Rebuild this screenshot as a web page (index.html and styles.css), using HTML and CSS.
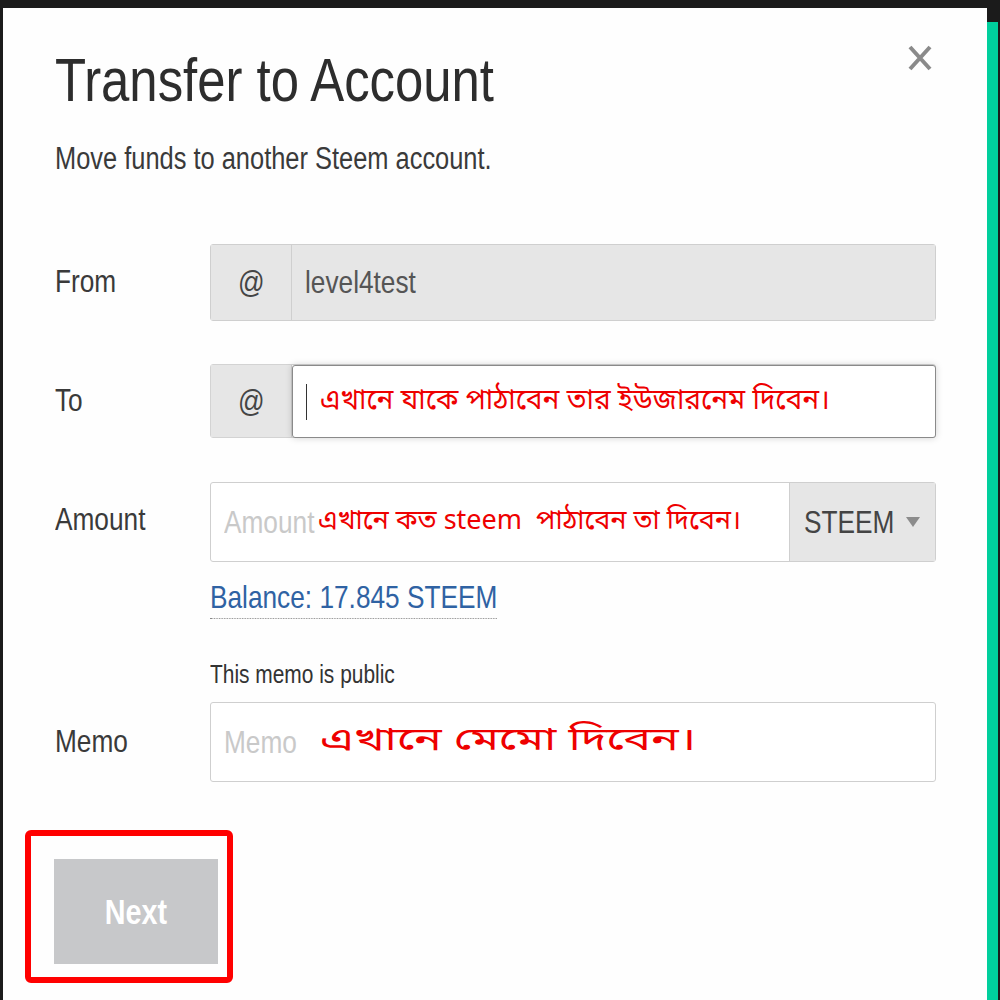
FILE: index.html
```html
<!DOCTYPE html>
<html lang="en">
<head>
<meta charset="utf-8">
<title>Transfer to Account</title>
<link rel="stylesheet" href="styles.css">
</head>
<body>
<div class="frame">
  <div class="modal">
    <button class="close" aria-label="Close">
      <svg width="24" height="28" viewBox="0 0 24 28"><path d="M2 3 L22 25 M22 3 L2 25" stroke="#8a8a8a" stroke-width="4" fill="none"/></svg>
    </button>
    <h1 class="title"><span class="cond">Transfer to Account</span></h1>
    <p class="subtitle"><span class="cond">Move funds to another Steem account.</span></p>

    <div class="form">
      <div class="label lbl-from"><span class="cond">From</span></div>
      <div class="group g-from">
        <span class="addon"><span class="cond mid">@</span></span>
        <div class="field disabled"><span class="cond">level4test</span></div>
      </div>

      <div class="label lbl-to"><span class="cond">To</span></div>
      <div class="group g-to">
        <span class="addon"><span class="cond mid">@</span></span>
        <div class="field focused"><span class="caret"></span><span class="bn">এখানে যাকে পাঠাবেন তার ইউজারনেম দিবেন।</span></div>
      </div>

      <div class="label lbl-amount"><span class="cond">Amount</span></div>
      <div class="group g-amount">
        <div class="field plain"><span class="ph"><span class="cond">Amount</span></span><span class="bn bn-amount">এখানে কত steem&nbsp; পাঠাবেন তা দিবেন।</span></div>
        <div class="select"><span class="steem"><span class="cond">STEEM</span></span><span class="arrow"></span></div>
      </div>

      <div class="spacer"></div>
      <div class="balance-row"><span class="balance cond">Balance: 17.845 STEEM</span></div>

      <div class="spacer"></div>
      <div class="note"><span class="cond">This memo is public</span></div>

      <div class="label lbl-memo"><span class="cond">Memo</span></div>
      <div class="group g-memo">
        <div class="field plain"><span class="ph ph-memo"><span class="cond">Memo</span></span><span class="bn bn-memo">এখানে মেমো দিবেন।</span></div>
      </div>
    </div>

    <div class="highlight">
      <button class="next"><span class="cond mid">Next</span></button>
    </div>
  </div>
  <div class="stripe"></div>
</div>
</body>
</html>
```

FILE: styles.css
```css
html, body {
  margin: 0;
  padding: 0;
  background: #1b1b1b;
  height: 1000px;
  overflow: hidden;
}
.frame {
  display: flex;
  align-items: flex-start;
  padding-left: 3px;
  height: 1000px;
}
.modal {
  position: relative;
  width: 984px;
  height: 992px;
  margin-top: 8px;
  background: #fefefe;
  box-sizing: border-box;
  padding: 37px 51px 0 52px;
  font-family: "Liberation Sans", Arial, sans-serif;
  color: #333;
}
.cond {
  display: inline-block;
  white-space: nowrap;
  transform: scaleX(0.82);
  transform-origin: left center;
}
.cond.mid { transform-origin: center center; }
.stripe {
  width: 11px;
  height: 978px;
  margin-top: 22px;
  background: #00cf9d;
}
.close {
  position: absolute;
  top: 36px;
  right: 55px;
  border: 0;
  background: none;
  padding: 0;
  cursor: pointer;
}
.title {
  margin: 0;
  font-weight: normal;
  font-size: 62px;
  line-height: 70px;
  color: #2d2d2d;
}
.subtitle {
  margin: 26px 0 0;
  font-size: 31px;
  line-height: 36px;
  color: #3a3a3a;
}
.form {
  display: grid;
  grid-template-columns: 155px 1fr;
  align-items: center;
  margin-top: 67px;
}
.label {
  font-size: 32px;
  line-height: 36px;
  color: #3a3a3a;
  margin-top: -4px;
}
.lbl-to { margin-top: 40px; }
.lbl-amount { margin-top: 38px; }
.lbl-memo { margin-top: 11px; }
.group {
  display: flex;
  border: 1px solid #cfcfcf;
  border-radius: 3px;
  box-sizing: border-box;
  height: 77px;
  background: #fff;
}
.g-to { margin-top: 43px; height: 74px; border-color: #d3d3d3; }
.g-amount { margin-top: 44px; height: 80px; }
.g-memo { margin-top: 13px; height: 80px; }
.addon {
  width: 80px;
  flex: none;
  display: flex;
  align-items: center;
  justify-content: center;
  background: #e6e6e6;
  border-right: 1px solid #cfcfcf;
  font-size: 32px;
  color: #444;
}
.field {
  flex: 1;
  display: flex;
  align-items: center;
  font-size: 32px;
  color: #555;
  padding-left: 13px;
  min-width: 0;
}
.field.disabled { background: #e6e6e6; }
.field.focused {
  background: #fff;
  border: 1px solid #8a8a8a;
  border-radius: 3px;
  margin: 0 -1px -1px 0;
  box-shadow: 0 0 7px rgba(0,0,0,0.18);
  position: relative;
}
.caret {
  width: 1px;
  height: 36px;
  background: #333;
  margin-right: 13px;
}
.bn {
  font-family: "Noto Sans Bengali", "Noto Serif Bengali", "Lohit Bengali", "Mukti", "FreeSans", sans-serif;
  color: #ee0000;
  font-size: 28px;
  white-space: nowrap;
}
.bn-amount { font-size: 27px; }
.bn-memo {
  display: inline-block;
  font-size: 32px;
  transform: scaleX(1.45);
  transform-origin: left center;
}
.ph { color: #c9c9c9; width: 94px; flex: none; }
.ph-memo { width: 96px; }
.select {
  width: 146px;
  flex: none;
  display: flex;
  align-items: center;
  padding-left: 14px;
  box-sizing: border-box;
  background: #e6e6e6;
  border-left: 1px solid #cfcfcf;
  font-size: 32px;
  color: #444;
}
.steem { width: 102px; flex: none; }
.arrow {
  width: 0;
  height: 0;
  border-left: 7px solid transparent;
  border-right: 7px solid transparent;
  border-top: 10px solid #8c8c8c;
}
.spacer { height: 1px; }
.balance-row { margin-top: 17px; }
.balance {
  font-size: 32px;
  line-height: 36px;
  color: #2f62a3;
  padding-bottom: 3px;
  border-bottom: 1px dotted #888;
}
.note {
  margin-top: 40px;
  font-size: 25.5px;
  line-height: 30px;
  color: #333;
}
.highlight {
  width: fit-content;
  margin: 48px 0 0 -30px;
  border: 6px solid #ff0000;
  border-radius: 6px;
  padding: 23px 9px 13px 23px;
}
.next {
  display: block;
  width: 164px;
  height: 105px;
  border: 0;
  padding: 0;
  background: #c7c8ca;
  color: #fff;
  font-family: "Liberation Sans", Arial, sans-serif;
  font-weight: bold;
  font-size: 35px;
}
```
